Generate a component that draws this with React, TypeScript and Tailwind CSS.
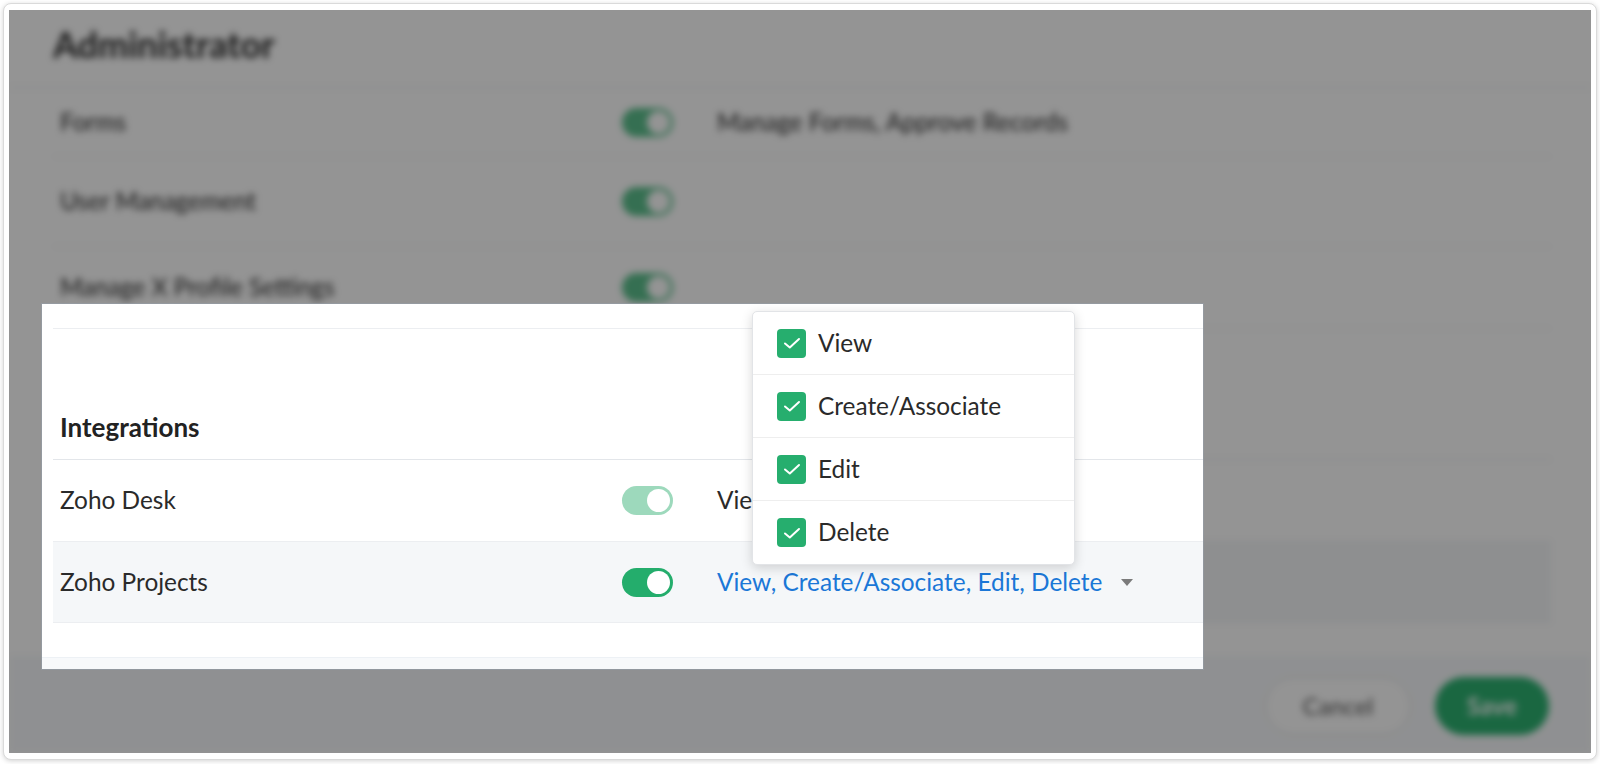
import React from "react";

const FONT = "[font-family:Lato,'Noto_Sans',sans-serif]";

function Toggle({ tone }: { tone: "light" | "mid" | "dark" }) {
  const cls =
    tone === "light"
      ? "w-[51px] h-[29px] rounded-full bg-[#9dd9bc] flex items-center justify-end pr-[3px] shrink-0"
      : tone === "mid"
      ? "w-[51px] h-[29px] rounded-full bg-[#5cc08d] flex items-center justify-end pr-[3px] shrink-0"
      : "w-[51px] h-[29px] rounded-full bg-[#24ad6c] flex items-center justify-end pr-[3px] shrink-0";
  return (
    <div className={cls}>
      <div className="w-[23px] h-[23px] rounded-full bg-white" />
    </div>
  );
}

function Row({
  label,
  tone,
  desc,
  shaded,
  blue,
  caret,
  h,
}: {
  label: string;
  tone: "light" | "mid" | "dark";
  desc?: string;
  shaded?: boolean;
  blue?: boolean;
  caret?: boolean;
  h: string;
}) {
  return (
    <div
      className={`${h} flex items-center pl-[7px] border-b border-[#eceef1] ${
        shaded ? "bg-[#f5f7f9]" : ""
      }`}
    >
      <div className="w-[562px] text-[24.4px] text-[#2a2a2a]">{label}</div>
      <Toggle tone={tone} />
      {desc ? (
        <div className="ml-[44px] flex items-center">
          <span className={blue ? "text-[24.4px] text-[#1b77d7]" : "text-[24.4px] text-[#2a2a2a]"}>{desc}</span>
          {caret ? (
            <svg width="12" height="7" viewBox="0 0 12 7" className="ml-[19px] mt-[2px]">
              <path d="M0 0 L12 0 L6 7 Z" fill="#7b7b7b" />
            </svg>
          ) : null}
        </div>
      ) : null}
    </div>
  );
}

function Page() {
  return (
    <div className={`w-[1582px] h-[743px] bg-white flex flex-col ${FONT}`}>
      <div className="h-[78px] shrink-0 pl-[44px] pt-[14px] border-b border-[#e3e6ea]">
        <div className="text-[36px] leading-[40px] font-bold text-[#2a2a2a]">Administrator</div>
      </div>
      <div className="ml-[44px] mr-[40px] flex flex-col">
        <Row h="h-[69px]" label="Forms" tone="mid" desc="Manage Forms, Approve Records" />
        <Row h="h-[90px]" label="User Management" tone="mid" />
        <Row h="h-[82px]" label="Manage X Profile Settings" tone="mid" />
        <div className="h-[131px] flex items-end pl-[7px] pb-[17px] border-b border-[#e3e6ea]">
          <div className="text-[26px] leading-[30px] font-bold text-[#222]">Integrations</div>
        </div>
        <Row h="h-[82px]" label="Zoho Desk" tone="light" desc="View" />
        <Row h="h-[81px]" label="Zoho Projects" tone="dark" shaded blue caret desc="View, Create/Associate, Edit, Delete" />
      </div>
      <div className="mt-[34px] flex-1 bg-[#f7f9fb] border-t border-[#edf1f5] flex items-center justify-end pr-[42px] gap-[24px]">
        <div className="w-[146px] h-[58px] rounded-full border border-[#d7d9dc] bg-white flex items-center justify-center text-[24px] text-[#555]">
          Cancel
        </div>
        <div className="w-[114px] h-[58px] rounded-full bg-[#2db271] flex items-center justify-center text-[24px] font-bold text-white">
          Save
        </div>
      </div>
    </div>
  );
}

function CheckItem({ label, last }: { label: string; last?: boolean }) {
  return (
    <div
      className={
        last
          ? "h-[63px] flex items-center pl-[24px] gap-[12px]"
          : "h-[63px] flex items-center pl-[24px] gap-[12px] border-b border-[#eeeeee]"
      }
    >
      <div className="w-[29px] h-[29px] rounded-[4px] bg-[#26ae6e] flex items-center justify-center">
        <svg width="20" height="20" viewBox="0 0 20 20">
          <path d="M3 10.5 L7.8 14.5 L17 6" fill="none" stroke="white" strokeWidth="2" strokeLinecap="round" strokeLinejoin="round" />
        </svg>
      </div>
      <span className="text-[24.4px] text-[#2a2a2a]">{label}</span>
    </div>
  );
}

export default function App() {
  return (
    <div className={`relative w-[1600px] h-[764px] bg-white pt-[3px] pl-[3px] ${FONT}`}>
      <div className="w-[1594px] h-[757px] rounded-[8px] border border-[#dadada] shadow-[0_1px_5px_rgba(0,0,0,0.18)] pt-[6px] pb-[6px] px-[5px] bg-white">
        <div className="relative w-[1582px] h-[743px] overflow-hidden bg-white">
          <div className="blur-[3.5px]">
            <Page />
          </div>
          <div className="absolute inset-0 bg-black/[0.42]" />
        </div>
      </div>

      <div className="absolute left-[42px] top-[304px] w-[1161px] h-[365px] overflow-hidden bg-white shadow-[0_0_0_1px_rgba(150,158,170,0.55)]">
        <div className="-ml-[33px] -mt-[294px]">
          <Page />
        </div>
        <div className="absolute left-[710px] top-[7px] w-[323px] bg-white rounded-[5px] border border-[#e2e4e7] shadow-[0_3px_12px_rgba(0,0,0,0.16)] flex flex-col">
          <CheckItem label="View" />
          <CheckItem label="Create/Associate" />
          <CheckItem label="Edit" />
          <CheckItem label="Delete" last />
        </div>
      </div>
    </div>
  );
}
